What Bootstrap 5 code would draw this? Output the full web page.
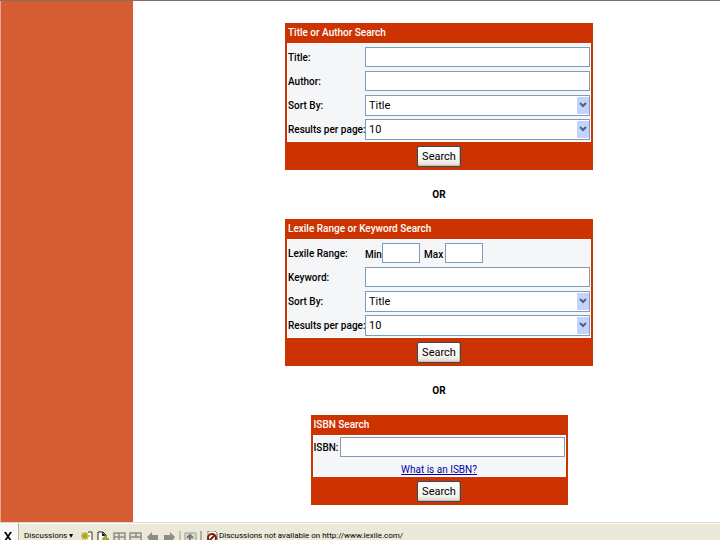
<!DOCTYPE html>
<html lang="en">
<head>
<meta charset="utf-8">
<meta name="viewport" content="width=device-width, initial-scale=1">
<title>Book search</title>
<link rel="stylesheet" href="https://cdn.jsdelivr.net/npm/bootstrap@5.3.0/dist/css/bootstrap.min.css">
<style>
body { font: 10px/16px Roboto, "Liberation Sans", sans-serif; color: #000; background: #fff; }
.page-top { border-top: 1px solid #85705f; }
.side-strip { width: 133px; background: #d65c33; border-left: 1px solid #e9a58d; }
.search-area { padding: 22px 0 17px 25px; }
.search-panel { width: 100%; max-width: 308px; background: #c30; border: 2px solid #c30; }
.isbn-panel { max-width: 257px; }
.panel-title { font-size: 10px; font-weight: 500; line-height: 16px; color: #fff; margin: 0; padding: 0 1px 2px; }
.panel-fields { background: #f5f6f8; border: 1px solid #fff; padding: 3px 0 1px; display: grid; grid-template-columns: 77px 1fr; row-gap: 3px; font-weight: 500; white-space: nowrap; }
.panel-fields > * { min-height: 21px; }
.isbn-panel .panel-fields { grid-template-columns: 26px 1fr; row-gap: 0; padding-top: 1px; padding-bottom: 0; }
.isbn-panel .help-row { grid-column: 1 / -1; min-height: 18px; }
.panel-foot { padding: 4px 0 1px; }
.field { height: 20px; border: 1px solid #7f9db9; border-radius: 0; background: #fff; padding: 0 3px; min-width: 0; font-size: 11px; line-height: 18px; color: #000; }
select.field { height: 21px; appearance: none; }
.range-field { width: 38px; }
.range-label { width: 17px; padding-top: 4px; }
.range-label-wide { width: 25px; padding-left: 4px; }
.drop-arrow { top: 2px; right: 1px; pointer-events: none; }
.xp-btn { height: 21px; width: 44px; padding: 0; border: 1px solid #394a5a; border-radius: 2px; background: linear-gradient(#fff, #f3f2ec 75%, #d8d4c8); font-size: 11px; line-height: 18px; color: #000; box-shadow: inset -1px -1px #c7c2b4; }
.divider-word { font-weight: 700; line-height: 17px; padding: 16px 0; }
.help-link { font-weight: 400; line-height: 20px; color: #00a; }
.discuss-bar { height: 18px; background: #ece9d8; border-top: 1px solid #dedbcd; box-shadow: inset 0 1px #fff; font-size: 8px; }
.bar-close { width: 19px; height: 18px; padding: 8px 0 0; border: 0; border-right: 1px solid #b8b5a5; background: #f7f8f7; }
.bar-item { border: 0; background: none; padding: 8px 0 0; line-height: 10px; color: #000; }
.bar-discuss { margin-left: 5px; width: 52px; text-align: left; }
.bar-icons { padding-top: 8px; margin-left: 4px; }
.bar-status { margin: 0; padding-left: 1px; }
</style>
<script src="https://cdn.jsdelivr.net/npm/bootstrap@5.3.0/dist/js/bootstrap.bundle.min.js"></script>
</head>
<body class="d-flex flex-column min-vh-100">
<div class="page-top d-flex flex-grow-1">
  <aside class="side-strip flex-shrink-0"></aside>
  <main class="search-area flex-grow-1 d-flex flex-column align-items-center">
    <form class="search-panel">
      <h2 class="panel-title">Title or Author Search</h2>
      <div class="panel-fields">
        <label for="title" class="d-flex align-items-center">Title:</label>
        <div class="d-flex"><input id="title" type="text" class="field flex-grow-1"></div>
        <label for="author" class="d-flex align-items-center">Author:</label>
        <div class="d-flex"><input id="author" type="text" class="field flex-grow-1"></div>
        <label for="sort1" class="d-flex align-items-center">Sort By:</label>
        <div class="d-flex position-relative"><select id="sort1" class="field flex-grow-1"><option>Title</option><option>Author</option></select>
          <svg class="drop-arrow position-absolute" width="12" height="17" viewBox="0 0 12 17" aria-hidden="true"><rect width="12" height="17" rx="1" fill="#c3d3fb"/><path d="M3 6l3 3 3-3" fill="none" stroke="#4d6185" stroke-width="2"/></svg></div>
        <label for="count1" class="d-flex align-items-center">Results per page:</label>
        <div class="d-flex position-relative"><select id="count1" class="field flex-grow-1"><option>10</option><option>20</option></select>
          <svg class="drop-arrow position-absolute" width="12" height="17" viewBox="0 0 12 17" aria-hidden="true"><rect width="12" height="17" rx="1" fill="#c3d3fb"/><path d="M3 6l3 3 3-3" fill="none" stroke="#4d6185" stroke-width="2"/></svg></div>
      </div>
      <div class="panel-foot d-flex justify-content-center"><button type="button" class="xp-btn">Search</button></div>
    </form>
    <div class="divider-word">OR</div>
    <form class="search-panel">
      <h2 class="panel-title">Lexile Range or Keyword Search</h2>
      <div class="panel-fields">
        <label for="min" class="d-flex align-items-center">Lexile Range:</label>
        <div class="d-flex"><label for="min" class="range-label">Min</label><input id="min" type="text" class="field range-field"><label for="max" class="range-label range-label-wide">Max</label><input id="max" type="text" class="field range-field"></div>
        <label for="keyword" class="d-flex align-items-center">Keyword:</label>
        <div class="d-flex"><input id="keyword" type="text" class="field flex-grow-1"></div>
        <label for="sort2" class="d-flex align-items-center">Sort By:</label>
        <div class="d-flex position-relative"><select id="sort2" class="field flex-grow-1"><option>Title</option><option>Author</option></select>
          <svg class="drop-arrow position-absolute" width="12" height="17" viewBox="0 0 12 17" aria-hidden="true"><rect width="12" height="17" rx="1" fill="#c3d3fb"/><path d="M3 6l3 3 3-3" fill="none" stroke="#4d6185" stroke-width="2"/></svg></div>
        <label for="count2" class="d-flex align-items-center">Results per page:</label>
        <div class="d-flex position-relative"><select id="count2" class="field flex-grow-1"><option>10</option><option>20</option></select>
          <svg class="drop-arrow position-absolute" width="12" height="17" viewBox="0 0 12 17" aria-hidden="true"><rect width="12" height="17" rx="1" fill="#c3d3fb"/><path d="M3 6l3 3 3-3" fill="none" stroke="#4d6185" stroke-width="2"/></svg></div>
      </div>
      <div class="panel-foot d-flex justify-content-center"><button type="button" class="xp-btn">Search</button></div>
    </form>
    <div class="divider-word">OR</div>
    <form class="search-panel isbn-panel">
      <h2 class="panel-title">ISBN Search</h2>
      <div class="panel-fields">
        <label for="isbn" class="d-flex align-items-center">ISBN:</label>
        <div class="d-flex"><input id="isbn" type="text" class="field flex-grow-1"></div>
        <div class="help-row d-flex justify-content-center align-items-end"><a href="#isbn" class="help-link lh-sm">What is an ISBN?</a></div>
      </div>
      <div class="panel-foot d-flex justify-content-center"><button type="button" class="xp-btn">Search</button></div>
    </form>
  </main>
</div>
<footer class="discuss-bar d-flex overflow-hidden">
  <button type="button" class="bar-close" aria-label="Close"><svg class="d-block ms-1" width="8" height="9" viewBox="0 0 8 9"><path d="M0 0h2l2 3 2-3h2L5 4.500 8 9H6L4 6 2 9H0l3-4.500z" fill="#000"/></svg></button>
  <button type="button" class="bar-item bar-discuss text-nowrap">Discussions ▾</button>
  <svg class="bar-icons flex-shrink-0" width="138" height="21" viewBox="80 0 138 13" aria-hidden="true">
    <path d="M87 1h5v12h-8V6" fill="#fff"/><path d="M88 1h4v12" fill="none" stroke="#333"/>
    <path d="M81 5h9M85 1v9M82 2l6 6M88 2l-6 6" stroke="#aaa91c" stroke-width="1.500"/>
    <path d="M98 13V1h5l3 3v9" fill="#fff" stroke="#222"/><path d="M102 1v4h4" fill="#222"/><path d="M109 8h-6m3-3-3 3 3 3" stroke="#aaa91c" fill="none" stroke-width="2"/>
    <g fill="#e4e2d6" stroke="#8f8e84" stroke-width="1.500"><path d="M114 2h11v9h-11zM114 6h11M119 2v9"/><path d="M130 2h11v9h-11zM130 6h11M136 2v5"/></g>
    <path d="M147 6l5-5v3h6v6h-6v3zM175 6l-5-5v3h-6v6h6v3z" fill="#8f8e84"/>
    <path d="M180 0v13" stroke="#9b998b"/>
    <path d="M185 2h11v9h-11z" fill="#dddcd2" stroke="#999"/><path d="M190 9V4m-3 3 3-3 3 3" fill="none" stroke="#777" stroke-width="2"/>
    <path d="M201 0v13" stroke="#77756b"/>
    <path d="M208 0h7l2 2v11h-9z" fill="#fff" stroke="#777"/><circle cx="212" cy="7" r="4" fill="none" stroke="#7b1f10" stroke-width="2"/><path d="M209 10l6-6" stroke="#7b1f10" stroke-width="2"/>
  </svg>
  <p class="bar-item bar-status text-nowrap">Discussions not available on http://www.lexile.com/</p>
</footer>
</body>
</html>
